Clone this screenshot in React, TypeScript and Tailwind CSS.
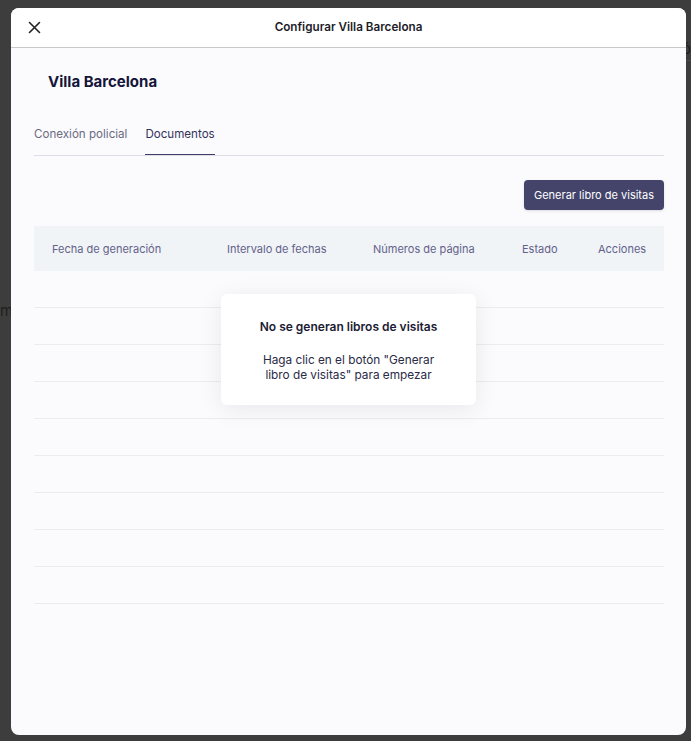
import React from "react";

const rows = Array.from({ length: 9 });

export default function App() {
  return (
    <div
      className="relative w-[691px] h-[741px] bg-[#3d3d3d] overflow-hidden"
      style={{ fontFamily: "Inter, 'Noto Sans', sans-serif" }}
    >
      {/* faint underlying page behind overlay */}
      <div className="absolute left-0 top-[300px] text-[15px] text-[#1f1f1f]">m</div>
      <div className="absolute right-0 top-[38px] text-[15px] text-[#1f1f1f]">ó</div>
      <div className="absolute right-0 top-[100px] w-[10px] h-px bg-[#2f4448]" />
      <div className="absolute right-0 top-[60px] w-[10px] h-px bg-[#4a4a4a]" />

      <div className="absolute left-[11px] top-[8px] w-[675px] h-[727px] rounded-[8px] bg-[#fbfbfe] overflow-hidden flex flex-col">
        {/* header */}
        <div className="relative h-[40px] shrink-0 bg-white border-b border-[#c9c9c9] flex items-center justify-center">
          <button className="absolute left-[16px] top-[12px] w-[14px] h-[14px] flex items-center justify-center text-[#222]">
            <svg width="13" height="13" viewBox="0 0 13 13" fill="none" stroke="currentColor" strokeWidth="1.6" strokeLinecap="round">
              <path d="M1.5 1.5 L11.5 11.5 M11.5 1.5 L1.5 11.5" />
            </svg>
          </button>
          <span className="text-[11.7px] font-semibold text-[#1c1c28]">Configurar Villa Barcelona</span>
        </div>

        {/* body */}
        <div className="pl-[23px] pr-[22px] flex flex-col">
          <h2 className="mt-[24px] ml-[14px] text-[15px] font-bold text-[#15153a] leading-[20px]">Villa Barcelona</h2>

          <div className="mt-[24px] flex border-b border-[#dedee8] h-[40px]">
            <div className="h-full pt-[11px] leading-[14px] text-[11.6px] text-[#6a6a80] pr-[18px]">Conexión policial</div>
            <div className="h-full pt-[11px] leading-[14px] text-[11.6px] text-[#34345a] border-b-[1.5px] border-[#3e3e68] -mb-px">Documentos</div>
          </div>

          <div className="mt-[24px] flex justify-end">
            <button className="h-[30px] px-[10px] rounded-[4px] bg-[#44446b] text-white text-[11px] shadow-sm">
              Generar libro de visitas
            </button>
          </div>

          <div className="relative mt-[16px]">
            <div className="h-[45px] pt-[2px] bg-[#f1f4f7] pl-[18px] grid grid-cols-[175px_146px_149px_76px_1fr] items-center text-[11px] text-[#62628a]">
              <div>Fecha de generación</div>
              <div>Intervalo de fechas</div>
              <div>Números de página</div>
              <div>Estado</div>
              <div>Acciones</div>
            </div>
            {rows.map((_, i) => (
              <div key={i} className="h-[37px] border-b border-[#ebebf0]" />
            ))}

            <div className="absolute left-[187px] top-[68px] w-[255px] h-[111px] bg-white rounded-[6px] shadow-[0_4px_24px_rgba(0,0,0,0.08)] flex flex-col items-center text-center">
              <div className="mt-[24px] text-[12px] font-semibold text-[#1b1b33]">No se generan libros de visitas</div>
              <div className="mt-[17px] text-[11.8px] leading-[15px] text-[#2a2a45]">
                Haga clic en el botón "Generar
                <br />
                libro de visitas" para empezar
              </div>
            </div>
          </div>
        </div>
      </div>
    </div>
  );
}
